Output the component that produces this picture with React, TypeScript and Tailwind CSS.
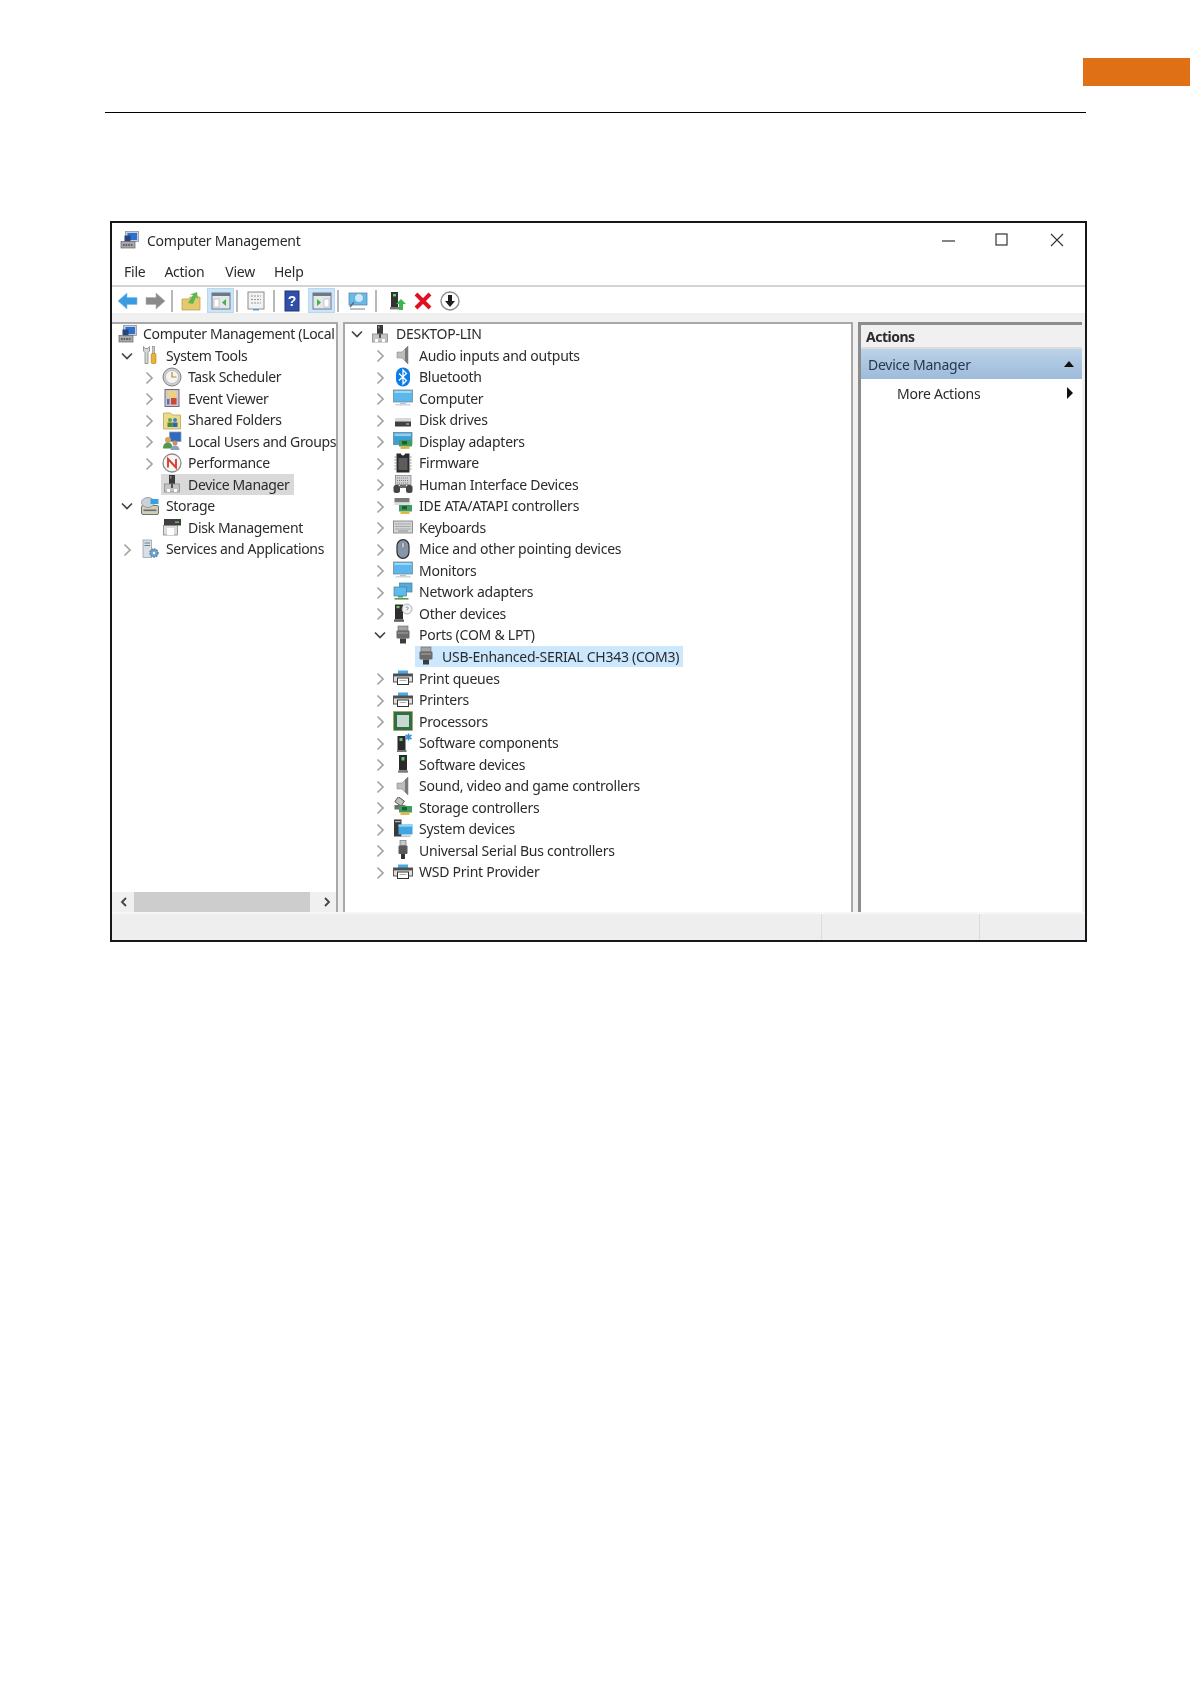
import React from "react";

type IconName = string;

function Icon({ name }: { name: IconName }) {
  const monitor = (
    <>
      <rect x="0.5" y="2" width="19" height="12" fill="#5cb8ec" stroke="#7a8a96" strokeWidth="0.8" />
      <rect x="1.5" y="3" width="17" height="2" fill="#9ad8f6" />
      <rect x="7" y="14.5" width="6" height="1.5" fill="#b8c4cc" />
      <rect x="2.5" y="16" width="15" height="1.5" fill="#cfd6db" />
    </>
  );
  const tower = (
    <>
      <rect x="7" y="1" width="6" height="10" fill="#3b3b3b" />
      <rect x="8" y="2" width="1.5" height="2.5" fill="#8a8a8a" />
      <rect x="2.5" y="10" width="15" height="8" fill="#c4c4c4" stroke="#8c8c8c" strokeWidth="0.8" />
      <rect x="9" y="10" width="2" height="4" fill="#555" />
      <rect x="5" y="15" width="3" height="3" fill="#fff" />
      <rect x="12" y="15" width="3" height="3" fill="#fff" />
    </>
  );
  const port = (
    <>
      <rect x="5" y="1" width="10" height="5" fill="#a4a4a4" stroke="#666" strokeWidth="0.6" />
      <rect x="3.5" y="5.5" width="13" height="8" rx="1" fill="#6b6b6b" />
      <rect x="5" y="7.5" width="10" height="1" fill="#a8a8a8" />
      <rect x="7" y="13.5" width="6" height="5" fill="#3c3c3c" />
    </>
  );
  const printer = (
    <>
      <rect x="5" y="2.5" width="10" height="3.5" fill="#4aa8e2" />
      <rect x="0.5" y="6" width="19" height="8" fill="#dedede" stroke="#555" strokeWidth="1" />
      <rect x="0.5" y="6" width="19" height="2.4" fill="#4f4f4f" />
      <rect x="4.5" y="10" width="11" height="6.5" fill="#fff" stroke="#333" strokeWidth="1" />
      <path d="M6.5 12.5h7" stroke="#999" strokeWidth="0.8" />
    </>
  );
  const speaker = (
    <>
      <path d="M4 7h5l6-6v18l-6-6H4z" fill="#bcbcbc" stroke="#8c8c8c" strokeWidth="0.6" />
      <path d="M12 4l3-3v18l-3-3z" fill="#7a7a7a" />
    </>
  );
  const card = (
    <>
      <rect x="6" y="9" width="13" height="6.5" fill="#3f9c63" />
      <rect x="9" y="10" width="5" height="3.4" fill="#1f5c37" />
      <rect x="7.5" y="15.5" width="9" height="2.4" fill="#e2b43a" />
    </>
  );
  const body: Record<string, React.ReactNode> = {
    root: (
      <>
        <rect x="5.5" y="1.5" width="13" height="10" fill="#c9ced6" stroke="#8a96a6" strokeWidth="0.8" />
        <rect x="7.5" y="3" width="9.5" height="7" fill="#2f6fd0" />
        <rect x="4.5" y="5.5" width="6" height="6" fill="#26467e" />
        <rect x="1" y="11.5" width="14" height="6.5" fill="#a8a8a8" stroke="#666" strokeWidth="0.7" />
        <path d="M3 15h10" stroke="#444" strokeWidth="1.6" strokeDasharray="1.6 1" />
      </>
    ),
    tools: (
      <>
        <path d="M3.5 1.5v4.5l1.5 1.5v11h3v-11L9.5 6V1.5L8 3.5H5z" fill="#d8d8d8" stroke="#777" strokeWidth="0.7" />
        <rect x="12.5" y="1.5" width="2.2" height="7" fill="#c9c9c9" stroke="#777" strokeWidth="0.5" />
        <rect x="11.2" y="8.5" width="4.8" height="10" rx="1" fill="#e8b52e" stroke="#96711a" strokeWidth="0.5" />
      </>
    ),
    clock: (
      <>
        <circle cx="10" cy="10" r="9" fill="#cfcfcf" stroke="#7e7e7e" />
        <circle cx="10" cy="10" r="6.5" fill="#f4f4f4" stroke="#aaa" strokeWidth="0.6" />
        <path d="M10 5v5h4.5" fill="none" stroke="#c08a20" strokeWidth="1.2" />
      </>
    ),
    event: (
      <>
        <rect x="3" y="1.5" width="14" height="17" fill="#cbc8d6" stroke="#6f6a80" />
        <rect x="5.5" y="3" width="9" height="6.5" fill="#edd47a" />
        <rect x="9" y="10" width="5.5" height="6.5" fill="#d2452f" />
        <rect x="5" y="11" width="2.5" height="5.5" fill="#5b6fa8" />
      </>
    ),
    shared: (
      <>
        <path d="M1.5 3h7l2 2h8v14h-17z" fill="#ecd98a" stroke="#b49a4a" strokeWidth="0.7" />
        <circle cx="8" cy="10" r="2" fill="#5aa84a" />
        <circle cx="13" cy="10" r="2" fill="#3f80c8" />
        <rect x="5.5" y="12.5" width="5" height="4.5" fill="#4a8a3a" />
        <rect x="10.5" y="12.5" width="5" height="4.5" fill="#2f68a8" />
      </>
    ),
    users: (
      <>
        <rect x="7.5" y="1" width="11.5" height="9.5" fill="#2f6cc0" stroke="#8b96a8" strokeWidth="0.7" />
        <circle cx="6" cy="9" r="3" fill="#d9a068" />
        <path d="M1 17.5c0-4 2-6 5-6s4.5 2 4.5 6z" fill="#4f9a4a" />
        <circle cx="13" cy="12" r="2.5" fill="#c89060" />
        <path d="M8.5 19c0-3 2-4.5 4.5-4.5s4.5 1.5 4.5 4.5z" fill="#8ca1c4" />
      </>
    ),
    perf: (
      <>
        <circle cx="10" cy="10" r="9" fill="#f6f6f6" stroke="#8c8c8c" strokeWidth="1.3" />
        <path d="M6 14.5V6l8 8.5V6" fill="none" stroke="#d8412f" strokeWidth="1.9" />
      </>
    ),
    tower,
    storage: (
      <>
        <rect x="1.5" y="9.5" width="17" height="9" rx="1.5" fill="#cfcfb8" stroke="#707070" />
        <ellipse cx="8" cy="6.5" rx="6.5" ry="5" fill="#c8d2d8" stroke="#7a8890" strokeWidth="0.7" />
        <rect x="10.5" y="3" width="8" height="5" fill="#35a2dc" />
        <rect x="3.5" y="13.5" width="13" height="1.6" fill="#6c6c6c" />
      </>
    ),
    diskm: (
      <>
        <rect x="2" y="2" width="17" height="6.5" fill="#3f3f3f" />
        <rect x="13" y="4.5" width="4" height="1.4" fill="#6fc96f" />
        <rect x="1.5" y="8.5" width="14" height="9.5" fill="#dcdcdc" stroke="#777" strokeWidth="0.7" />
        <rect x="5" y="11" width="7" height="7" fill="#fff" />
      </>
    ),
    services: (
      <>
        <rect x="3" y="1" width="8.5" height="17.5" fill="#d8dfe6" stroke="#8c96a0" strokeWidth="0.7" />
        <rect x="4.5" y="3.5" width="5.5" height="1" fill="#6c7a88" />
        <rect x="4.5" y="6" width="5.5" height="1" fill="#6c7a88" />
        <circle cx="14" cy="14" r="4" fill="#6fa5c8" stroke="#4f7c9c" strokeWidth="1.4" strokeDasharray="1.6 1" />
        <circle cx="14" cy="14" r="1.2" fill="#fff" />
      </>
    ),
    speaker,
    bt: (
      <>
        <rect x="3" y="0.5" width="14" height="19" rx="7" fill="#0a7ee8" />
        <path d="M6 6.5l7.5 7L10 17V3l3.5 3.5L6 13.5" fill="none" stroke="#fff" strokeWidth="1.3" />
      </>
    ),
    monitor,
    disk: (
      <>
        <rect x="2" y="8" width="16" height="3.5" fill="#d8d8d8" />
        <rect x="2" y="11.5" width="16" height="5" fill="#3f3f3f" />
        <rect x="13" y="13.4" width="3" height="1.2" fill="#b8b8b8" />
      </>
    ),
    display: (
      <>
        <rect x="0.5" y="1.5" width="18.5" height="12" fill="#3d9fd8" stroke="#5f7c8f" strokeWidth="0.7" />
        <rect x="1.5" y="2.5" width="16.5" height="2.6" fill="#8fd0f2" />
        {card}
      </>
    ),
    chip: (
      <>
        <path d="M3.5 0.5h4.500a2 2 0 0 0 4 0h4.500v19h-13z" fill="#2c2c2c" />
        <path d="M1.5 4h2M1.5 7h2M1.5 10h2M1.5 13h2M1.5 16h2M16.5 4h2M16.5 7h2M16.5 10h2M16.5 13h2M16.5 16h2" stroke="#8c8c8c" strokeWidth="1.1" />
        <rect x="5.5" y="5" width="9" height="12" fill="#5c5c5c" />
      </>
    ),
    hid: (
      <>
        <rect x="2.5" y="1.5" width="15.5" height="9" fill="#cfd3d8" stroke="#7c7c7c" strokeWidth="0.7" />
        <path d="M4 4h12M4 6.5h12M4 9h12" stroke="#808080" strokeWidth="1" strokeDasharray="1 1" />
        <rect x="0.5" y="11" width="6.5" height="8" rx="2.5" fill="#454545" />
        <rect x="13" y="11" width="6.5" height="8" rx="2.5" fill="#454545" />
        <rect x="7" y="11" width="6" height="3" fill="#6c6c6c" />
      </>
    ),
    ide: (
      <>
        <rect x="1.5" y="2" width="15" height="4.5" fill="#7a7a7a" />
        <rect x="1.5" y="6.5" width="16" height="2.5" fill="#dcdcdc" />
        {card}
      </>
    ),
    keyboard: (
      <>
        <rect x="0.5" y="4" width="19" height="12" fill="#d2d6da" stroke="#7a7a7a" strokeWidth="0.8" />
        <path d="M2.5 7h15M2.5 9.5h15M2.5 12h15" stroke="#8c8c8c" strokeWidth="1.1" strokeDasharray="1.2 0.8" />
        <rect x="5" y="13.5" width="10" height="1" fill="#8c8c8c" />
      </>
    ),
    mouse: (
      <>
        <rect x="4" y="0.7" width="12" height="18.6" rx="6" fill="#8795a8" stroke="#2d2d2d" strokeWidth="1.2" />
        <rect x="9" y="3.5" width="2" height="5.5" rx="1" fill="#e8e8e8" stroke="#444" strokeWidth="0.4" />
      </>
    ),
    network: (
      <>
        <rect x="6.5" y="1" width="12.5" height="9" fill="#54acde" stroke="#4a7c94" strokeWidth="0.7" />
        <rect x="1" y="5" width="12.5" height="9" fill="#5cbcec" stroke="#4a7c94" strokeWidth="0.7" />
        <rect x="5" y="14" width="5" height="1.5" fill="#55a055" />
        <rect x="1.5" y="16" width="14" height="1.6" fill="#55a055" />
      </>
    ),
    other: (
      <>
        <rect x="2" y="1.5" width="8" height="15" fill="#2e2e2e" />
        <rect x="3.5" y="3" width="3" height="2.2" fill="#6fc96f" />
        <rect x="1" y="16.5" width="10" height="2.3" fill="#5f5f5f" />
        <circle cx="14" cy="6" r="5" fill="#f2f2f2" stroke="#9c9c9c" strokeWidth="0.8" />
        <path d="M12.8 5c.3-1.6 2.6-1.4 2.4.2-.1.8-1.2 1-1.2 2" fill="none" stroke="#6f8fb0" strokeWidth="0.9" />
      </>
    ),
    port,
    printer,
    cpu: (
      <>
        <rect x="0.5" y="0.5" width="19" height="19" fill="#2f6f46" stroke="#b49a4a" strokeWidth="1" strokeDasharray="1 0.6" />
        <rect x="4" y="4" width="12" height="12" fill="#c8d8d0" />
      </>
    ),
    swc: (
      <>
        <rect x="4.5" y="3" width="8" height="14" fill="#2a2a2a" />
        <rect x="6.5" y="5" width="3" height="3" fill="#58c878" />
        <rect x="4" y="17" width="9.5" height="2" fill="#777" />
        <path d="M15.5 0.5v7M12.5 2l6 4M18.5 2l-6 4" stroke="#3b8fd8" strokeWidth="1.6" />
      </>
    ),
    swd: (
      <>
        <rect x="6" y="1" width="8" height="15.5" fill="#2a2a2a" />
        <rect x="8.5" y="3" width="3" height="3.5" fill="#58c878" />
        <rect x="5" y="16.5" width="10" height="2.2" fill="#7a7a7a" />
      </>
    ),
    sc: (
      <>
        <rect x="3" y="1" width="7.5" height="6" fill="#c0c0b8" stroke="#444" strokeWidth="0.8" transform="rotate(35 6 4)" />
        <rect x="1.5" y="8" width="11" height="4.5" fill="#6f6f6f" />
        {card}
      </>
    ),
    sys: (
      <>
        <rect x="1" y="0.5" width="7.5" height="17" fill="#3a3a3a" />
        <rect x="2" y="2" width="5.5" height="1.2" fill="#bbb" />
        <rect x="5.5" y="5.5" width="14" height="10" fill="#3fa6e0" />
        <rect x="5.5" y="5.5" width="14" height="2.2" fill="#8fd4f4" />
        <rect x="8" y="16.5" width="9.5" height="1.4" fill="#bbb" />
      </>
    ),
    usb: (
      <>
        <rect x="7" y="0.5" width="6" height="5" fill="#c9c9c9" stroke="#666" strokeWidth="0.6" />
        <rect x="5.5" y="5.5" width="9" height="8.5" rx="1" fill="#5a5a5a" />
        <rect x="8" y="14" width="4" height="5" fill="#333" />
      </>
    ),
  };
  return (
    <svg width="20" height="20" viewBox="0 0 20 20" className="shrink-0">
      {body[name]}
    </svg>
  );
}

function Chevron({ open }: { open?: boolean }) {
  return open ? (
    <svg width="14" height="14" viewBox="0 0 14 14" className="mt-[1px] shrink-0">
      <path d="M2 4.5L7 9.5l5-5" fill="none" stroke="#444" strokeWidth="1.7" />
    </svg>
  ) : (
    <svg width="14" height="14" viewBox="0 0 14 14" className="mt-[2px] shrink-0">
      <path d="M4.5 1.5L10 7l-5.5 5.5" fill="none" stroke="#a3a3a3" strokeWidth="1.7" />
    </svg>
  );
}

type Row = { d: number; c?: "open" | "closed"; i: string; t: string; hl?: string };

function Tree({ rows, start, step }: { rows: Row[]; start: number; step: number }) {
  return (
    <div className="-mt-[1px] flex flex-col">
      {rows.map((r) => (
        <div key={r.t} className="flex h-[21.52px] items-center whitespace-nowrap">
          {r.d >= 0 ? (
            <>
              <div className="shrink-0" style={{ width: start + r.d * step }} />
              <div className="flex w-[14px] shrink-0 items-center justify-center">
                {r.c ? <Chevron open={r.c === "open"} /> : null}
              </div>
            </>
          ) : null}
          <div
            className={`flex h-[21.52px] items-center pr-[4px] ${r.d >= 0 ? "ml-[4.5px] pl-[1.5px]" : "pl-[6px]"} ${r.hl ?? ""}`}
          >
            <Icon name={r.i} />
            <span className={r.d >= 0 ? "ml-[6px]" : "ml-[5px]"}>{r.t}</span>
          </div>
        </div>
      ))}
    </div>
  );
}

const leftRows: Row[] = [
  { d: -1, i: "root", t: "Computer Management (Local" },
  { d: 0, c: "open", i: "tools", t: "System Tools" },
  { d: 1, c: "closed", i: "clock", t: "Task Scheduler" },
  { d: 1, c: "closed", i: "event", t: "Event Viewer" },
  { d: 1, c: "closed", i: "shared", t: "Shared Folders" },
  { d: 1, c: "closed", i: "users", t: "Local Users and Groups" },
  { d: 1, c: "closed", i: "perf", t: "Performance" },
  { d: 1, i: "tower", t: "Device Manager", hl: "bg-[#d9d9d9]" },
  { d: 0, c: "open", i: "storage", t: "Storage" },
  { d: 1, i: "diskm", t: "Disk Management" },
  { d: 0, c: "closed", i: "services", t: "Services and Applications" },
];

const centerRows: Row[] = [
  { d: 0, c: "open", i: "tower", t: "DESKTOP-LIN" },
  { d: 1, c: "closed", i: "speaker", t: "Audio inputs and outputs" },
  { d: 1, c: "closed", i: "bt", t: "Bluetooth" },
  { d: 1, c: "closed", i: "monitor", t: "Computer" },
  { d: 1, c: "closed", i: "disk", t: "Disk drives" },
  { d: 1, c: "closed", i: "display", t: "Display adapters" },
  { d: 1, c: "closed", i: "chip", t: "Firmware" },
  { d: 1, c: "closed", i: "hid", t: "Human Interface Devices" },
  { d: 1, c: "closed", i: "ide", t: "IDE ATA/ATAPI controllers" },
  { d: 1, c: "closed", i: "keyboard", t: "Keyboards" },
  { d: 1, c: "closed", i: "mouse", t: "Mice and other pointing devices" },
  { d: 1, c: "closed", i: "monitor", t: "Monitors" },
  { d: 1, c: "closed", i: "network", t: "Network adapters" },
  { d: 1, c: "closed", i: "other", t: "Other devices" },
  { d: 1, c: "open", i: "port", t: "Ports (COM & LPT)" },
  { d: 2, i: "port", t: "USB-Enhanced-SERIAL CH343 (COM3)", hl: "bg-[#cce8ff]" },
  { d: 1, c: "closed", i: "printer", t: "Print queues" },
  { d: 1, c: "closed", i: "printer", t: "Printers" },
  { d: 1, c: "closed", i: "cpu", t: "Processors" },
  { d: 1, c: "closed", i: "swc", t: "Software components" },
  { d: 1, c: "closed", i: "swd", t: "Software devices" },
  { d: 1, c: "closed", i: "speaker", t: "Sound, video and game controllers" },
  { d: 1, c: "closed", i: "sc", t: "Storage controllers" },
  { d: 1, c: "closed", i: "sys", t: "System devices" },
  { d: 1, c: "closed", i: "usb", t: "Universal Serial Bus controllers" },
  { d: 1, c: "closed", i: "printer", t: "WSD Print Provider" },
];

function Sep({ className }: { className: string }) {
  return <div className={`h-[22px] w-[2px] shrink-0 bg-[#b8b8b8] ${className}`} />;
}

function ToolIcon({
  children,
  active,
  className,
}: {
  children: React.ReactNode;
  active?: boolean;
  className?: string;
}) {
  return (
    <div
      className={`flex h-[25px] w-[27px] shrink-0 items-center justify-center ${active ? "border border-[#b8d8f0] bg-[#cce4f7]" : ""} ${className ?? ""}`}
    >
      <svg width="22" height="22" viewBox="0 0 22 22">
        {children}
      </svg>
    </div>
  );
}

function Toolbar() {
  return (
    <div className="flex h-[28px] items-center border-t-2 border-[#d4d4d4] pl-[2.5px] pt-[1px]">
      <ToolIcon>
        <path d="M1 11l9-8v4.5h10v7H10V19z" fill="#3a9be0" stroke="#7cc0ee" strokeWidth="0.6" />
      </ToolIcon>
      <ToolIcon>
        <path d="M21 11l-9-8v4.5H2v7h10V19z" fill="#8a8a8a" stroke="#b0b0b0" strokeWidth="0.6" />
      </ToolIcon>
      <Sep className="ml-[2.5px] mr-[4.5px]" />
      <ToolIcon>
        <path d="M2 9h7l1-2h10v13H2z" fill="#e4ca6c" stroke="#b49a4a" strokeWidth="0.7" />
        <path d="M8 13l5-8-3-.5 7-2.5 1 7-2-2-3 7z" fill="#5cb84f" />
      </ToolIcon>
      <ToolIcon active className="ml-[2.5px]">
        <rect x="2" y="3" width="18" height="16" fill="#e4e8ec" stroke="#6c7a86" />
        <rect x="2" y="3" width="18" height="3" fill="#6c7a86" />
        <rect x="4" y="9" width="5" height="8" fill="#fff" stroke="#99a" strokeWidth="0.5" />
        <path d="M16 9v7l-4-3.5z" fill="#45b045" />
      </ToolIcon>
      <Sep className="ml-[1.5px] mr-[5px]" />
      <ToolIcon>
        <rect x="3" y="2" width="16" height="17" fill="#f2f2f2" stroke="#8c8c8c" />
        <path d="M6 6h10M6 9.5h10M6 13h10" stroke="#8a97a6" strokeWidth="1.2" strokeDasharray="2 1" />
        <rect x="8" y="19" width="6" height="1.5" fill="#4ea3de" />
      </ToolIcon>
      <Sep className="ml-[3.5px] mr-[3.5px]" />
      <ToolIcon>
        <rect x="4" y="1" width="14" height="20" fill="#2f4fa8" stroke="#1f3478" />
        <text x="11" y="16" textAnchor="middle" fontSize="14" fontWeight="700" fill="#fff" fontFamily="Liberation Sans">
          ?
        </text>
      </ToolIcon>
      <ToolIcon active className="ml-[2.5px]">
        <rect x="2" y="3" width="18" height="16" fill="#e4e8ec" stroke="#6c7a86" />
        <rect x="2" y="3" width="18" height="3" fill="#6c7a86" />
        <rect x="13" y="9" width="5" height="8" fill="#fff" stroke="#99a" strokeWidth="0.5" />
        <path d="M6 9v7l4-3.5z" fill="#45b045" />
      </ToolIcon>
      <Sep className="ml-[2px] mr-[5.5px]" />
      <ToolIcon>
        <rect x="2" y="3" width="18" height="12" fill="#62bcee" stroke="#5a7c90" strokeWidth="0.7" />
        <circle cx="12" cy="8" r="4.5" fill="#cfe9f8" stroke="#5a9cc0" strokeWidth="0.7" />
        <path d="M7 12l-4 5" stroke="#5f6b78" strokeWidth="1.6" />
        <path d="M3 19h15" stroke="#9aa4ac" strokeWidth="1.4" />
      </ToolIcon>
      <Sep className="ml-[3.5px] mr-[6.5px]" />
      <ToolIcon>
        <rect x="5" y="2" width="7" height="15" fill="#333" />
        <rect x="7" y="4" width="3" height="2.4" fill="#6fd06f" />
        <rect x="4" y="17" width="9" height="2.4" fill="#777" />
        <path d="M10 14l5-5 5 5h-3v6h-4v-6z" fill="#3cb64a" />
      </ToolIcon>
      <ToolIcon className="-ml-[1px]">
        <path d="M4 4l14 14M18 4L4 18" stroke="#e01020" strokeWidth="4" />
      </ToolIcon>
      <ToolIcon>
        <circle cx="11" cy="11" r="9" fill="#fff" stroke="#8e8e8e" strokeWidth="1.4" />
        <path d="M9 5h4v6h3l-5 6-5-6h3z" fill="#1e1e1e" />
      </ToolIcon>
    </div>
  );
}

export default function App() {
  return (
    <div className="h-[1684px] w-[1191px] overflow-hidden bg-white font-['Noto_Sans',sans-serif] text-[14px] tracking-[-0.25px] text-[#2b2b2b]">
      <div className="flex justify-end pr-[1px] pt-[58px]">
        <div className="h-[28px] w-[107px] bg-[#e07016]" />
      </div>
      <div className="ml-[105px] mt-[26px] h-[1px] w-[981px] bg-black" />
      <div className="ml-[110px] mt-[108px] flex h-[721px] w-[977px] flex-col border-2 border-[#16161c] bg-white blur-[0.35px]">
        <div className="flex h-[34px] shrink-0 items-center pl-[8px]">
          <Icon name="root" />
          <span className="ml-[7px]">Computer Management</span>
          <div className="ml-auto flex items-center">
            <svg width="14" height="14" viewBox="0 0 14 14" className="mr-[39px]">
              <path d="M0 8h13" stroke="#333" strokeWidth="1.2" />
            </svg>
            <svg width="14" height="14" viewBox="0 0 14 14" className="mr-[41px]">
              <rect x="1" y="1" width="11" height="11" fill="none" stroke="#333" strokeWidth="1.2" />
            </svg>
            <svg width="14" height="14" viewBox="0 0 14 14" className="mr-[21px]">
              <path d="M1 1l12 12M13 1L1 13" fill="none" stroke="#333" strokeWidth="1.1" />
            </svg>
          </div>
        </div>
        <div className="flex h-[28px] shrink-0 items-center gap-[19px] pl-[12px]">
          <span>File</span>
          <span>Action</span>
          <span className="ml-[2px]">View</span>
          <span>Help</span>
        </div>
        <Toolbar />
        <div className="flex min-h-0 flex-1 gap-[5px] bg-[#f0f0f0] pt-[9px]">
          <div className="flex w-[226px] shrink-0 flex-col overflow-hidden border-r-2 border-t-2 border-[#a8a8a8] bg-white tracking-[-0.33px]">
            <div className="flex-1 overflow-hidden">
              <Tree rows={leftRows} start={8} step={22} />
            </div>
            <div className="flex h-[20px] shrink-0 items-center bg-[#f0f0f0] pl-[7px] pr-[4px]">
              <svg width="10" height="10" viewBox="0 0 10 10" className="shrink-0">
                <path d="M7 1L3 5l4 4" fill="none" stroke="#444" strokeWidth="1.8" />
              </svg>
              <div className="ml-[5px] mr-[12px] h-[20px] flex-1 bg-[#cdcdcd]" />
              <svg width="10" height="10" viewBox="0 0 10 10" className="shrink-0">
                <path d="M3 1l4 4-4 4" fill="none" stroke="#444" strokeWidth="1.8" />
              </svg>
            </div>
          </div>
          <div className="w-[510px] shrink-0 overflow-hidden border-l-2 border-r-2 border-t-2 border-[#a8a8a8] bg-white">
            <Tree rows={centerRows} start={5} step={23} />
          </div>
          <div className="flex w-[224px] shrink-0 flex-col border-l-[3px] border-t-[3px] border-[#8c8c8c] bg-white">
            <div className="flex h-[24px] shrink-0 items-center border-b-2 border-[#dcdcdc] bg-[#f0f0f0] pl-[5px] font-bold tracking-[-0.5px]">
              Actions
            </div>
            <div className="flex h-[30px] shrink-0 items-center justify-between bg-gradient-to-b from-[#bcd2e8] to-[#9dbbda] pl-[7px] pr-[7px] text-[#26384d]">
              <span>Device Manager</span>
              <svg width="12" height="8" viewBox="0 0 12 8">
                <path d="M6 1l5 6H1z" fill="#111" />
              </svg>
            </div>
            <div className="flex h-[28px] shrink-0 items-center justify-between pl-[36px] pr-[8px]">
              <span>More Actions</span>
              <svg width="8" height="12" viewBox="0 0 8 12">
                <path d="M1 0l6 6-6 6z" fill="#111" />
              </svg>
            </div>
          </div>
        </div>
        <div className="flex h-[28px] shrink-0 border-t-2 border-[#f7f7f7] bg-[#eeeeee]">
          <div className="w-[710px] border-r border-[#dcdcdc]" />
          <div className="w-[158px] border-r border-[#dcdcdc]" />
        </div>
      </div>
    </div>
  );
}
